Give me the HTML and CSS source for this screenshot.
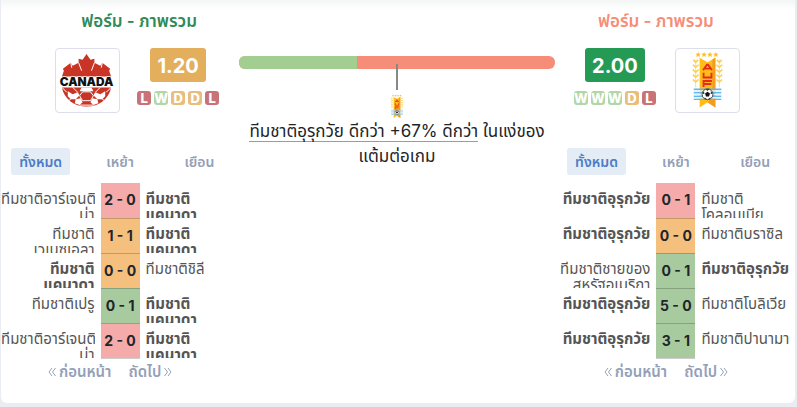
FILE: index.html
```html
<!DOCTYPE html>
<html lang="th">
<head>
<meta charset="utf-8">
<meta name="viewport" content="width=device-width, initial-scale=1">
<title>ฟอร์ม - ภาพรวม</title>
<link rel="stylesheet" href="styles.css">
</head>
<body>
<svg class="defs" aria-hidden="true">
  <symbol id="auf" viewBox="0 0 64 64">
    <g fill="#fbc02d">
      <path id="star" d="M22.500 3l.9 1.700 1.900.2-1.400 1.300.4 2-1.800-1-1.800 1 .4-2-1.400-1.300 1.900-.2z"/>
      <use href="#star" x="6"/><use href="#star" x="12"/><use href="#star" x="18"/>
    </g>
    <g id="wheat" fill="none" stroke="#fbcf58">
      <path d="M20 11v28" stroke-width=".7"/>
      <path d="M17.500 11l2.500 2.500 2.500-2.500M17 16l3 2.500 3-2.500M17 21l3 2.500 3-2.500M17 26l3 2.500 3-2.500M17 31l3 2.500 3-2.500" stroke-width="1.600"/>
    </g>
    <use href="#wheat" x="24"/>
    <path d="M24 9l8 4.500 8-4.500v50.500l-8-5.500-8 5.500z" fill="#ffbd16"/>
    <path d="M37 10.700l3-1.700v50.500l-8-5.500 5-5z" fill="#f79a20"/>
    <path d="M18 41h28M18 44.500h28M18 48h28M18 51h28" stroke="#63b8e5" stroke-width="1.600"/>
    <path d="M18 42.700h28M18 46.200h28M18 49.500h28" stroke="#e2f3fc" stroke-width="1.600"/>
    <g fill="none" stroke="#e52b20" stroke-width="1.900">
      <path d="M27.500 21.500l4-5.500h1l4 5.500M29.500 20h5M28 24v5h8v-5M28 38.500v-6h8.500M28 35.500h8"/>
    </g>
    <circle cx="32" cy="46" r="5.500" fill="#fff" stroke="#222" stroke-width=".8"/>
    <path d="M32 43.500l2.500 1.800-1 2.900h-3l-1-2.900zM30 41h4l-2 1.500zM27 45l1.500-2 .3 3zM37 45l-1.500-2-.3 3zM28.500 49.500l2 .2.500 1.500zM35.500 49.500l-2 .2-.5 1.500z" fill="#111"/>
  </symbol>
</svg>
<main class="card">
  <section class="side home">
    <h2 class="title">ฟอร์ม - ภาพรวม</h2>
    <div class="summary">
      <a class="crest" href="#" aria-label="ทีมชาติแคนาดา">
        <svg viewBox="0 0 64 64">
          <path d="M6 28l2-6-1-2 8-6 2 3 6-3v-4l4 1 4-6 4 6 4-1v4l6 3 2-3 8 6-1 2 2 6z" fill="#c83527"/>
          <path d="M23 14l3 8M39 14l-3 8M15 14l1 5M47 14l-1 5" stroke="#fff" stroke-width="1"/>
          <path d="M6 39h50c-2 11-12 19.500-25 19.500S8 50 6 39z" fill="#c83527"/>
          <path d="M26 39h10l2 4-4 0h-6l-4 0zM12 43l5 3 5-2 2 3-4 4-5 0-3-3zM50 43l-5 3-5-2-2 3 4 4 5 0 3-3zM20 51l5-1 2 4-3 3-5-2zM42 51l-5-1-2 4 3 3 5-2z" fill="#fff"/>
          <path d="M6 39l5 5M56 39l-5 5M15 51l-3 2M47 51l3 2M24 57l14 0M22 44l-5-5M40 44l5-5" stroke="#fff" stroke-width="1"/>
          <path d="M27 43.500h8l3 4-3 5h-8l-3-5z" fill="#c83527" stroke="#fff"/>
          <text class="crest-name" x="31" y="38" text-anchor="middle">CANADA</text>
        </svg>
      </a>
      <div class="rating">
        <span class="points amber">1.20</span>
        <div class="form"><span class="l">L</span><span class="w">W</span><span class="d">D</span><span class="d">D</span><span class="l">L</span></div>
      </div>
    </div>
    <div class="tabs"><button class="active">ทั้งหมด</button><button>เหย้า</button><button>เยือน</button></div>
    <table class="games">
      <tr><td><div>ทีมชาติอาร์เจนติ<br>น่า</div></td><td class="score lost">2 - 0</td><td><div class="own">ทีมชาติ<br>แคนาดา</div></td></tr>
      <tr><td><div>ทีมชาติ<br>เวเนซุเอลา</div></td><td class="score drawn">1 - 1</td><td><div class="own">ทีมชาติ<br>แคนาดา</div></td></tr>
      <tr><td><div class="own">ทีมชาติ<br>แคนาดา</div></td><td class="score drawn">0 - 0</td><td><div>ทีมชาติชิลี</div></td></tr>
      <tr><td><div>ทีมชาติเปรู</div></td><td class="score won">0 - 1</td><td><div class="own">ทีมชาติ<br>แคนาดา</div></td></tr>
      <tr><td><div>ทีมชาติอาร์เจนติ<br>น่า</div></td><td class="score lost">2 - 0</td><td><div class="own">ทีมชาติ<br>แคนาดา</div></td></tr>
    </table>
    <nav class="pager"><a href="#"><svg viewBox="0 0 8 8"><path d="M4 0L1 4l3 4M7.500 0l-3 4 3 4"/></svg>ก่อนหน้า</a><a href="#">ถัดไป<svg viewBox="0 0 8 8"><path d="M.5 0l3 4-3 4M4 0l3 4-3 4"/></svg></a></nav>
  </section>

  <section class="compare">
    <div class="bar"><span class="bar-home" style="width:37.2%"></span></div>
    <span class="pointer"></span>
    <svg class="mini" viewBox="14 2 36 60"><use href="#auf" width="64" height="64"/></svg>
    <p><span class="lead">ทีมชาติอุรุกวัย ดีกว่า +67% ดีกว่า</span> ในแง่ของ<br>แต้มต่อเกม</p>
  </section>

  <section class="side away">
    <h2 class="title">ฟอร์ม - ภาพรวม</h2>
    <div class="summary">
      <a class="crest" href="#" aria-label="ทีมชาติอุรุกวัย"><svg viewBox="0 0 64 64"><use href="#auf" width="64" height="64"/></svg></a>
      <div class="rating">
        <span class="points green">2.00</span>
        <div class="form"><span class="w">W</span><span class="w">W</span><span class="w">W</span><span class="d">D</span><span class="l">L</span></div>
      </div>
    </div>
    <div class="tabs"><button class="active">ทั้งหมด</button><button>เหย้า</button><button>เยือน</button></div>
    <table class="games">
      <tr><td><div class="own">ทีมชาติอุรุกวัย</div></td><td class="score lost">0 - 1</td><td><div>ทีมชาติ<br>โคลอมเบีย</div></td></tr>
      <tr><td><div class="own">ทีมชาติอุรุกวัย</div></td><td class="score drawn">0 - 0</td><td><div>ทีมชาติบราซิล</div></td></tr>
      <tr><td><div>ทีมชาติชายของ<br>สหรัฐอเมริกา</div></td><td class="score won">0 - 1</td><td><div class="own">ทีมชาติอุรุกวัย</div></td></tr>
      <tr><td><div class="own">ทีมชาติอุรุกวัย</div></td><td class="score won">5 - 0</td><td><div>ทีมชาติโบลิเวีย</div></td></tr>
      <tr><td><div class="own">ทีมชาติอุรุกวัย</div></td><td class="score won">3 - 1</td><td><div>ทีมชาติปานามา</div></td></tr>
    </table>
    <nav class="pager"><a href="#"><svg viewBox="0 0 8 8"><path d="M4 0L1 4l3 4M7.500 0l-3 4 3 4"/></svg>ก่อนหน้า</a><a href="#">ถัดไป<svg viewBox="0 0 8 8"><path d="M.5 0l3 4-3 4M4 0l3 4-3 4"/></svg></a></nav>
  </section>
</main>
</body>
</html>
```
FILE: styles.css
```css
* { box-sizing: border-box; }
body {
  margin: 0;
  padding: 0 2px 4px 1px;
  background: #e9edf1;
  color: #212529;
  font: 15px/16px Inter, "Noto Sans Thai", Loma, "Noto Sans", "DejaVu Sans", sans-serif;
}
.defs { display: none; }
.card {
  display: grid;
  grid-template-columns: 30fr 40fr 30fr;
  min-height: 403px;
  background: linear-gradient(#f3f6f5, #fff 10px);
  border-radius: 0 0 6px 6px;
}
.title {
  margin: 12px 0 18px;
  font-size: 17px;
  line-height: 18px;
  font-weight: 600;
  text-align: center;
}
.home .title { color: #2e8b57; padding-left: 38px; }
.away .title { color: #f68d78; padding-right: 40px; }
.summary { display: flex; justify-content: center; gap: 17px; }
.home .summary { padding-left: 34px; }
.away .summary { flex-direction: row-reverse; gap: 19px; padding-right: 38px; }
.crest {
  width: 65px;
  height: 65px;
  border: 1px solid #dcdfe9;
  border-radius: 4px;
  background: #fff;
}
.crest svg { display: block; width: 100%; height: 100%; }
.crest-name { font: 900 12px Inter, sans-serif; fill: #111; stroke: #fff; stroke-width: 1px; paint-order: stroke; }
.rating { display: flex; flex-direction: column; align-items: center; gap: 9px; }
.points {
  padding: 2px 7px 0;
  border-radius: 3px;
  color: #fff;
  font-size: 20px;
  line-height: 32px;
  font-weight: 700;
}
.amber { background: #e3af5d; }
.green { background: #259a55; }
.form { display: flex; gap: 3px; }
.form span {
  width: 14px;
  height: 14px;
  border-radius: 3px;
  color: #fff;
  font-size: 13px;
  line-height: 15px;
  font-weight: 800;
  display: flex;
  justify-content: center;
}
.l { background: #c97377; }
.w { background: #b2d7a5; }
.d { background: #e9bd7b; }
.tabs { display: grid; grid-template-columns: repeat(3, 1fr); justify-items: center; margin: 35px 0 8px; }
.tabs button {
  height: 27px;
  padding: 0 8px;
  border: 0;
  border-radius: 3px;
  background: none;
  color: #93a0b8;
  font: inherit;
  font-size: 14px;
  font-weight: 600;
}
.tabs .active { background: #e4ecf6; color: #4d7cc3; }
.games { width: 100%; border-collapse: collapse; table-layout: fixed; }
.games td { height: 35px; padding: 0 0 0 6px; vertical-align: top; color: #555; }
.games td:first-child { padding: 0 6px 0 0; text-align: right; }
.games div { height: 35px; padding-top: 8px; overflow: hidden; white-space: nowrap; }
.games .own { font-weight: 700; }
.games .score {
  width: 39px;
  padding: 0;
  border-bottom: 1px solid #00000033;
  color: #212529;
  font-size: 14px;
  font-weight: 700;
  text-align: center;
  vertical-align: middle;
}
.lost { background: #f5abaa; }
.drawn { background: #f5c07e; }
.won { background: #a7cb9e; }
.pager { display: flex; justify-content: center; gap: 17px; margin-top: 5px; padding-right: 20px; }
.pager a { color: #93a0b8; font-weight: 600; text-decoration: none; display: flex; align-items: center; gap: 3px; }
.pager svg { width: 8px; height: 8px; fill: none; stroke: currentColor; stroke-width: 1px; }
.compare { display: flex; flex-direction: column; align-items: center; padding: 56px 2px 0 0; }
.bar { width: 100%; height: 13px; border-radius: 6px; overflow: hidden; background: #f68d78; display: flex; }
.bar-home { background: #a3ce92; }
.pointer { width: 2px; height: 26px; margin-top: -5px; background: #888; position: relative; }
.mini { width: 16px; height: 25px; margin-top: 4px; }
.compare p { margin: 0; font-size: 17px; line-height: 25px; text-align: center; }
.lead { border-bottom: 1px solid #7bbd4b; }
```
